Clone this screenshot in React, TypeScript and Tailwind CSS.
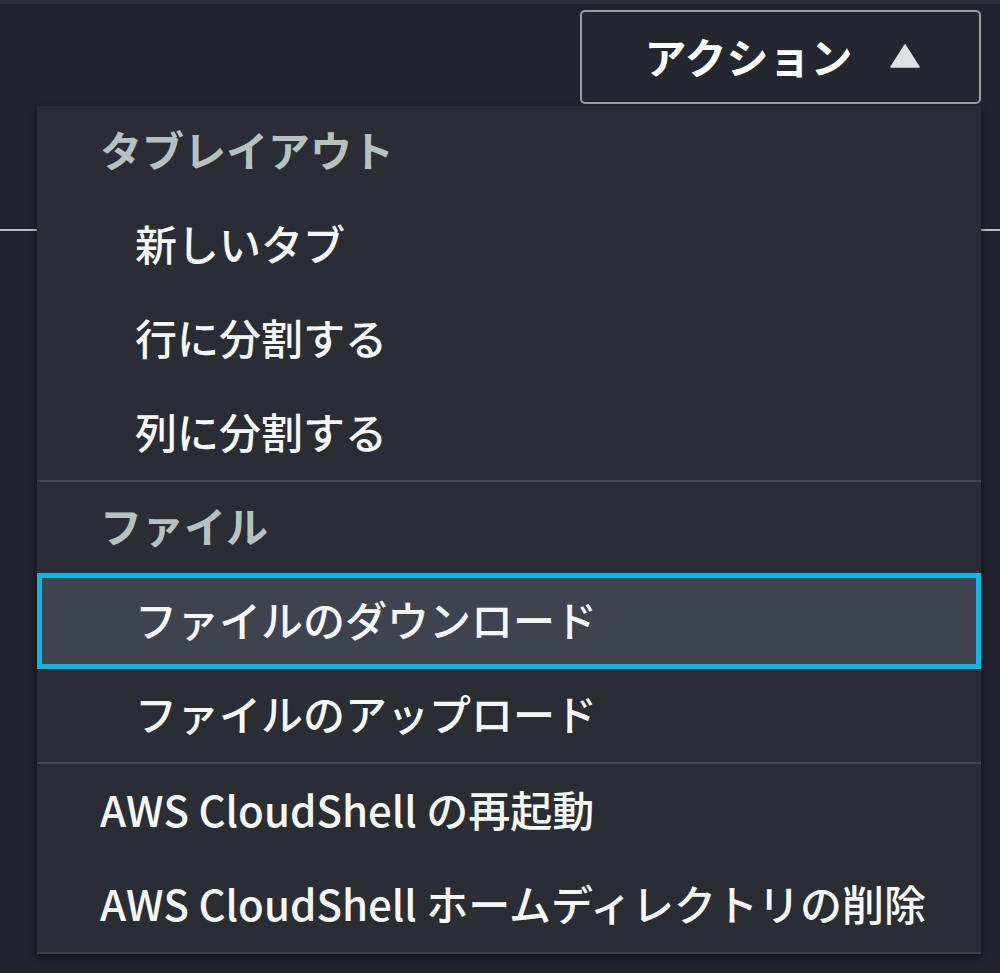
const font = "font-['Noto_Sans_CJK_JP','Noto_Sans',sans-serif]";

type Row = { label: string; kind: "header" | "item" | "top"; active?: boolean };

const groups: Row[][] = [
  [
    { label: "タブレイアウト", kind: "header" },
    { label: "新しいタブ", kind: "item" },
    { label: "行に分割する", kind: "item" },
    { label: "列に分割する", kind: "item" },
  ],
  [
    { label: "ファイル", kind: "header" },
    { label: "ファイルのダウンロード", kind: "item", active: true },
    { label: "ファイルのアップロード", kind: "item" },
  ],
  [
    { label: "AWS CloudShell の再起動", kind: "top" },
    { label: "AWS CloudShell ホームディレクトリの削除", kind: "top" },
  ],
];

function MenuRow({ row }: { row: Row }) {
  if (row.kind === "header") {
    return (
      <div className="h-[92px] flex items-center pb-[7px] pl-[63px] text-[42px] font-bold text-[#b4c2c0]">
        {row.label}
      </div>
    );
  }
  const pad = row.kind === "item" ? "pl-[98px]" : "pl-[63px]";
  if (row.active) {
    return (
      <div
        className={`h-[96px] -my-[1px] flex items-center pb-[6px] ${pad} text-[42px] font-medium text-[#f5f7f7] bg-[#3e434d] border-[5px] border-[#08b8e6]`}
      >
        <span className="-ml-[5px]">{row.label}</span>
      </div>
    );
  }
  return (
    <div className={`h-[94px] flex items-center pb-[6px] ${pad} text-[42px] font-medium text-[#f5f7f7]`}>
      {row.label}
    </div>
  );
}

export default function App() {
  return (
    <div className={`relative w-[1000px] h-[973px] overflow-hidden bg-[#20232b] ${font}`}>
      <div className="h-[4px] bg-[#2c2f36]" />

      {/* Header bar with actions button */}
      <div className="h-[227px] border-b-[2px] border-[#b9bdbd] flex justify-end items-start pt-[6px] pr-[19px]">
        <button className="w-[401px] h-[94px] rounded-[5px] border-[2px] border-[#95a0a0] bg-[#24272e] flex items-center justify-center gap-[38px] pl-[4px] pb-[2px]">
          <span className="text-[42px] font-bold text-white leading-none">アクション</span>
          <svg width="30" height="24" viewBox="0 0 30 24">
            <path d="M15 1 L29 23 L1 23 Z" fill="#dce2e2" stroke="#dce2e2" strokeWidth="1.5" strokeLinejoin="round" />
          </svg>
        </button>
      </div>

      {/* Dropdown menu */}
      <div className="absolute left-[37px] top-[106px] w-[944px] bg-[#2a2d33] border-b-[2px] border-[#3b3f46] shadow-[0_3px_6px_rgba(0,0,0,0.55)]">
        {groups.map((g, i) => (
          <div key={i} className={i > 0 ? "border-t-[2px] border-[#42464d]" : ""}>
            {g.map((row) => (
              <MenuRow key={row.label} row={row} />
            ))}
          </div>
        ))}
      </div>
    </div>
  );
}
